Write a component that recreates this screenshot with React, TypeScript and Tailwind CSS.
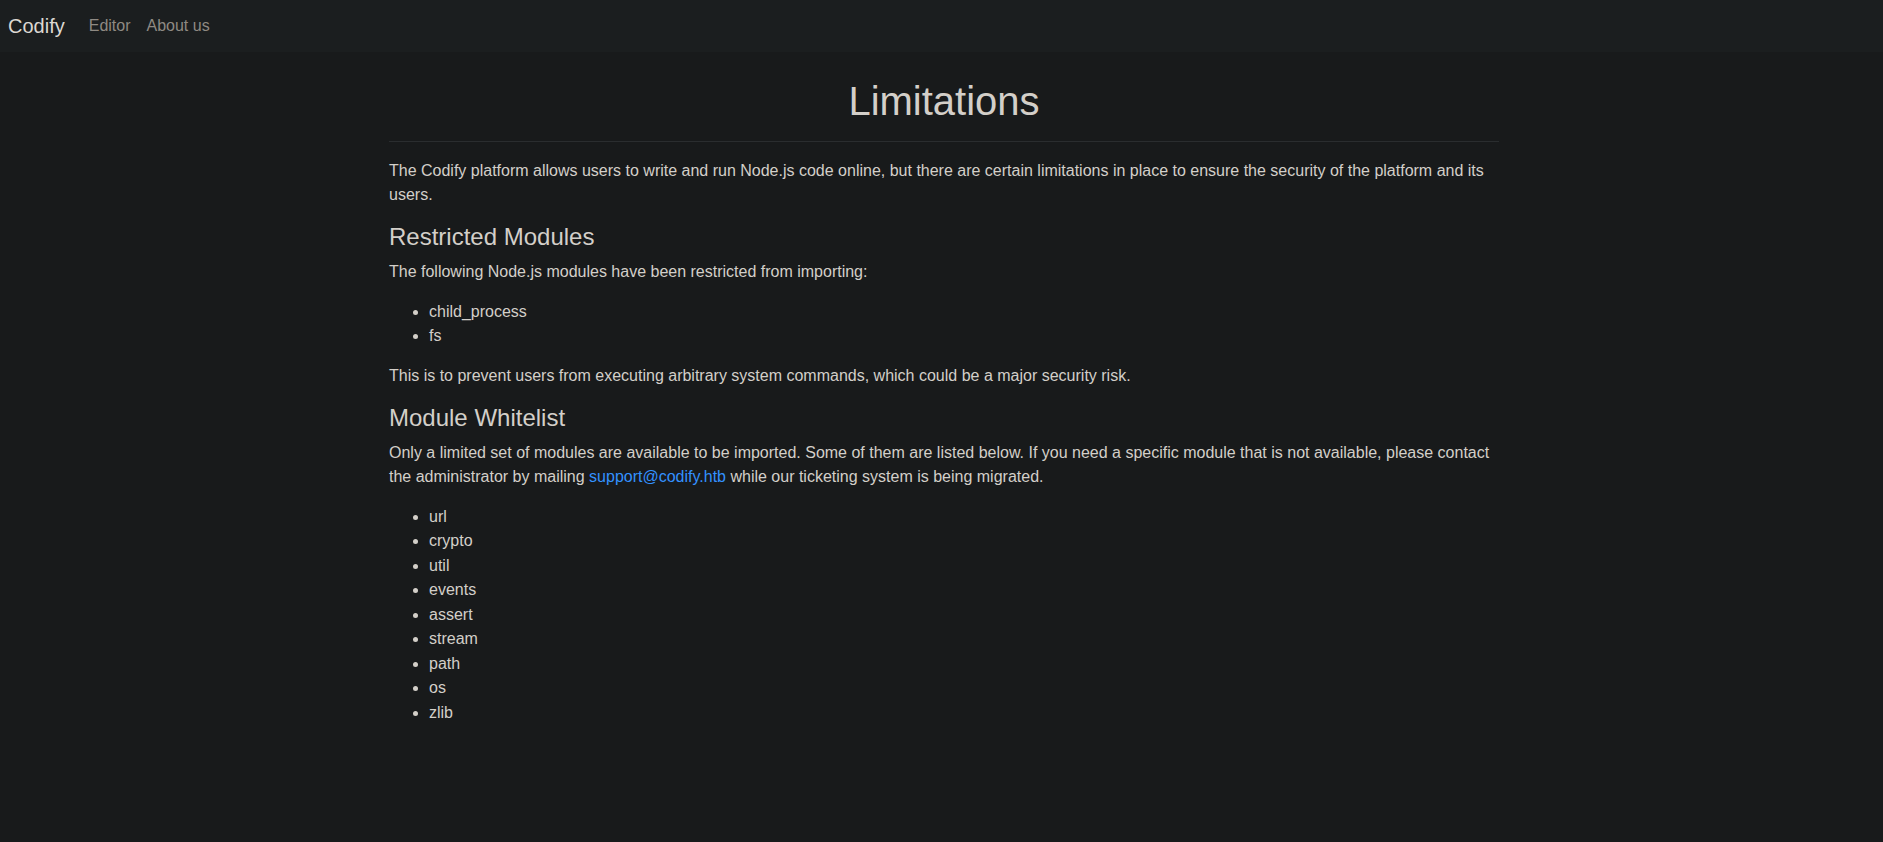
import React from "react";

export default function App() {
  const mods = ["url", "crypto", "util", "events", "assert", "stream", "path", "os", "zlib"];
  return (
    <div
      className="min-h-[842px] bg-[#181a1b] text-[#d3cfc9] text-[16px] leading-[24px]"
      style={{ fontFamily: '"Liberation Sans", Arial, Helvetica, sans-serif' }}
    >
      <nav className="h-[52px] bg-[#1b1e1f] flex items-center px-2">
        <span className="text-[20px] leading-[30px] text-[#dcd8d2] mr-4">Codify</span>
        <span className="px-2 text-[#8f8a83]">Editor</span>
        <span className="px-2 text-[#8f8a83]">About us</span>
      </nav>
      <main className="w-[1115px] mx-auto pl-[5px]">
        <h1 className="mt-[25px] text-[40px] leading-[48px] text-center text-[#d3cfc9]">Limitations</h1>
        <hr className="mt-4 mb-[17px] border-0 border-t border-[#2a2d2f]" />
        <p className="mb-4">
          The Codify platform allows users to write and run Node.js code online, but there are certain limitations in
          place to ensure the security of the platform and its users.
        </p>
        <h3 className="text-[24px] leading-[28.8px] mb-2">Restricted Modules</h3>
        <p className="mb-4">The following Node.js modules have been restricted from importing:</p>
        <ul className="list-disc pl-10 mb-4">
          <li>child_process</li>
          <li>fs</li>
        </ul>
        <p className="mb-4">
          This is to prevent users from executing arbitrary system commands, which could be a major security risk.
        </p>
        <h3 className="text-[24px] leading-[28.8px] mb-2">Module Whitelist</h3>
        <p className="mb-4">
          Only a limited set of modules are available to be imported. Some of them are listed below. If you need a
          specific module that is not available, please contact the administrator by mailing{" "}
          <a className="text-[#3391ff]" href="#">support@codify.htb</a> while our ticketing system is being migrated.
        </p>
        <ul className="list-disc pl-10 mb-4 mt-[2px]">
          {mods.map((m) => (
            <li key={m} className="leading-[24.5px]">{m}</li>
          ))}
        </ul>
      </main>
    </div>
  );
}
